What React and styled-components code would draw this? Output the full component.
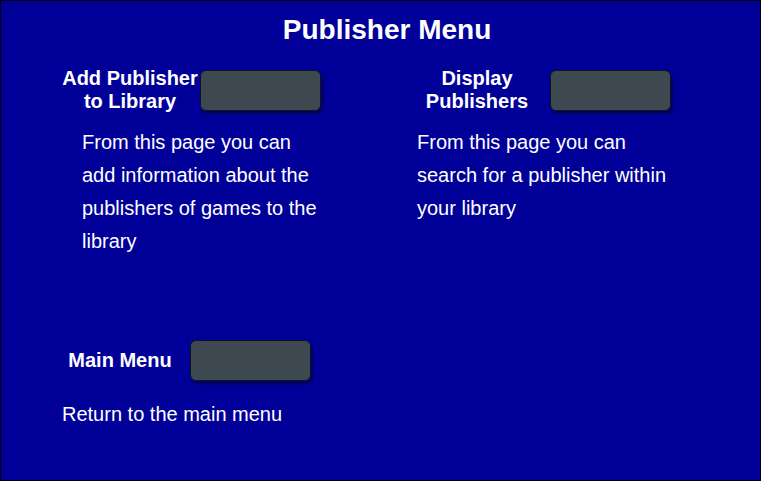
import styled, { createGlobalStyle } from "styled-components";

const GlobalStyle = createGlobalStyle`
    body {
        margin: 0;
        font-family: "Liberation Sans", Arial, sans-serif;
    }
`;

export default function App() {
    return (
        <>
            <GlobalStyle />
            <Frame>
                <Title>Publisher Menu</Title>
                <Options>
                    <Option $width={355}>
                        <HeaderRow>
                            <Label $width={136}>
                                Add Publisher
                                <br />
                                to Library
                            </Label>
                            <MenuButton $gap={2} />
                        </HeaderRow>
                        <Description $indent={20} $width={242}>
                            From this page you can add information about the
                            publishers of games to the library
                        </Description>
                    </Option>
                    <Option $width={300}>
                        <HeaderRow>
                            <Label $width={120}>
                                Display
                                <br />
                                Publishers
                            </Label>
                            <MenuButton $gap={13} />
                        </HeaderRow>
                        <Description $indent={0} $width={262}>
                            From this page you can search for a publisher within your
                            library
                        </Description>
                    </Option>
                </Options>
                <Footer>
                    <HeaderRow>
                        <Label $width={116}>Main Menu</Label>
                        <MenuButton $gap={12} />
                    </HeaderRow>
                    <FooterText>Return to the main menu</FooterText>
                </Footer>
            </Frame>
        </>
    );
}

const Frame = styled.div`
    width: 761px;
    height: 481px;
    box-sizing: border-box;
    border: 1px solid #000;
    background-color: #000099;
    color: #fff;
    overflow: hidden;
`;
const Title = styled.h1`
    margin: 12px 0 0;
    padding-left: 13px;
    text-align: center;
    font-size: 28px;
    line-height: 34px;
    font-weight: bold;
`;
const Options = styled.div`
    height: 230px;
    margin-top: 20px;
    padding-left: 61px;
    display: flex;
`;
const Option = styled.section`
    width: ${(p) => p.$width}px;
    display: flex;
    flex-direction: column;
`;
const HeaderRow = styled.div`
    display: flex;
    align-items: center;
`;
const Label = styled.h2`
    margin: 0;
    width: ${(p) => p.$width}px;
    text-align: center;
    font-size: 20px;
    line-height: 23px;
    font-weight: bold;
`;
const MenuButton = styled.button`
    flex-shrink: 0;
    width: 121px;
    height: 41px;
    margin-left: ${(p) => p.$gap}px;
    background-color: #3d4851;
    border: 1px solid #10131f;
    border-radius: 6px;
    box-shadow: 2px 3px 3px rgba(0, 0, 50, 0.6);
    cursor: pointer;
`;
const Description = styled.p`
    margin: 13px 0 0 ${(p) => p.$indent}px;
    width: ${(p) => p.$width}px;
    font-size: 20px;
    line-height: 33px;
`;
const Footer = styled.div`
    margin: 43px 0 0 61px;
`;
const FooterText = styled.p`
    margin: 17px 0 0;
    font-size: 20px;
    line-height: 33px;
`;
